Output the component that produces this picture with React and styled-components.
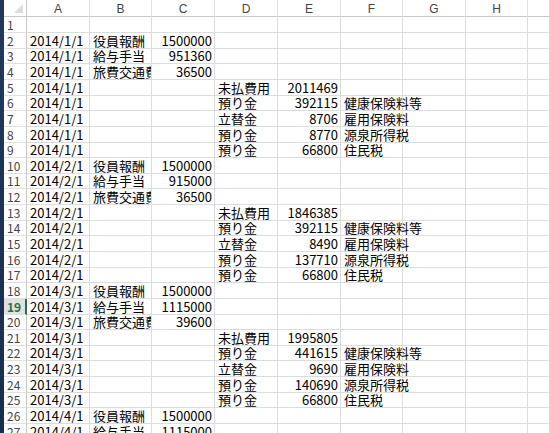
import React from "react";
import styled, { createGlobalStyle } from "styled-components";

const GlobalStyle = createGlobalStyle`
  html, body {
    margin: 0;
    padding: 0;
    background: #ffffff;
  }
  body {
    font-family: "Noto Sans CJK JP", "DejaVu Sans", sans-serif;
  }
`;

const Screen = styled.div`
  display: flex;
  width: 550px;
  height: 433px;
  overflow: hidden;
`;

const Edge = styled.div`
  width: 4px;
  flex-shrink: 0;
  background: linear-gradient(#22395c, #1a2e4c);
`;

const Sheet = styled.div`
  flex: 1;
  display: grid;
  grid-template-columns: 23px 63px 62px 63px 63px 63px 62px 63px 62px 1fr;
  grid-template-rows: 17.4px repeat(27, 15.65px);
  align-content: start;
`;

const Corner = styled.div`
  display: flex;
  align-items: flex-end;
  justify-content: flex-end;
  padding: 0 3px 3px 0;
  box-sizing: border-box;
  border-right: 1px solid #c8c8c8;
  border-bottom: 1px solid #c8c8c8;
`;

const Triangle = styled.div`
  width: 0;
  height: 0;
  border-left: 9px solid transparent;
  border-bottom: 9px solid #dcdcdc;
`;

const ColHead = styled.div`
  display: flex;
  align-items: center;
  justify-content: center;
  box-sizing: border-box;
  border-right: 1px solid #e1e1e1;
  border-bottom: 1px solid #c8c8c8;
  color: #444444;
  font-family: "Liberation Sans", "Noto Sans CJK JP", sans-serif;
  font-size: 12px;
  padding-top: 1px;
`;

const RowHead = styled.div`
  display: flex;
  align-items: flex-end;
  padding: 0 0 1px 3px;
  box-sizing: border-box;
  border-bottom: 1px solid #e1e1e1;
  border-right: ${(p) => (p.$active ? "2px solid #217346" : "1px solid #c8c8c8")};
  background: ${(p) => (p.$active ? "#e1e1e1" : "#ffffff")};
  color: ${(p) => (p.$active ? "#217346" : "#444444")};
  font-weight: ${(p) => (p.$active ? 700 : 400)};
  font-family: "Noto Sans CJK JP", sans-serif;
  font-size: 12px;
  line-height: 13px;
  white-space: nowrap;
`;

const Cell = styled.div`
  position: relative;
  display: flex;
  align-items: flex-end;
  justify-content: ${(p) => (p.$num ? "flex-end" : "flex-start")};
  padding: 0 2px 0 3px;
  box-sizing: border-box;
  border-right: 1px solid #dadcdd;
  border-bottom: 1px solid #dadcdd;
  overflow: ${(p) => (p.$spill ? "visible" : "hidden")};
  white-space: nowrap;
  color: #000000;
  font-size: 13px;
  line-height: 14px;
  z-index: ${(p) => (p.$spill ? 1 : 0)};
`;

const columns = ["A", "B", "C", "D", "E", "F", "G", "H", ""];

const rows = [
  [],
  ["2014/1/1", "役員報酬", "1500000"],
  ["2014/1/1", "給与手当", "951360"],
  ["2014/1/1", "旅費交通費", "36500"],
  ["2014/1/1", "", "", "未払費用", "2011469"],
  ["2014/1/1", "", "", "預り金", "392115", "健康保険料等"],
  ["2014/1/1", "", "", "立替金", "8706", "雇用保険料"],
  ["2014/1/1", "", "", "預り金", "8770", "源泉所得税"],
  ["2014/1/1", "", "", "預り金", "66800", "住民税"],
  ["2014/2/1", "役員報酬", "1500000"],
  ["2014/2/1", "給与手当", "915000"],
  ["2014/2/1", "旅費交通費", "36500"],
  ["2014/2/1", "", "", "未払費用", "1846385"],
  ["2014/2/1", "", "", "預り金", "392115", "健康保険料等"],
  ["2014/2/1", "", "", "立替金", "8490", "雇用保険料"],
  ["2014/2/1", "", "", "預り金", "137710", "源泉所得税"],
  ["2014/2/1", "", "", "預り金", "66800", "住民税"],
  ["2014/3/1", "役員報酬", "1500000"],
  ["2014/3/1", "給与手当", "1115000"],
  ["2014/3/1", "旅費交通費", "39600"],
  ["2014/3/1", "", "", "未払費用", "1995805"],
  ["2014/3/1", "", "", "預り金", "441615", "健康保険料等"],
  ["2014/3/1", "", "", "立替金", "9690", "雇用保険料"],
  ["2014/3/1", "", "", "預り金", "140690", "源泉所得税"],
  ["2014/3/1", "", "", "預り金", "66800", "住民税"],
  ["2014/4/1", "役員報酬", "1500000"],
  ["2014/4/1", "給与手当", "1115000"],
];

// C and E hold numbers, F text may run over into G
const isNum = (c) => c === 2 || c === 4;

const App = () => (
  <>
    <GlobalStyle />
    <Screen>
      <Edge />
      <Sheet>
        <Corner>
          <Triangle />
        </Corner>
        {columns.map((name, i) => (
          <ColHead key={i}>{name}</ColHead>
        ))}
        {rows.map((row, r) => (
          <React.Fragment key={r}>
            <RowHead $active={r + 1 === 19}>{r + 1}</RowHead>
            {columns.map((_, c) => (
              <Cell key={c} $num={isNum(c)} $spill={c === 5}>
                {row[c] || ""}
              </Cell>
            ))}
          </React.Fragment>
        ))}
      </Sheet>
    </Screen>
  </>
);

export default App;
